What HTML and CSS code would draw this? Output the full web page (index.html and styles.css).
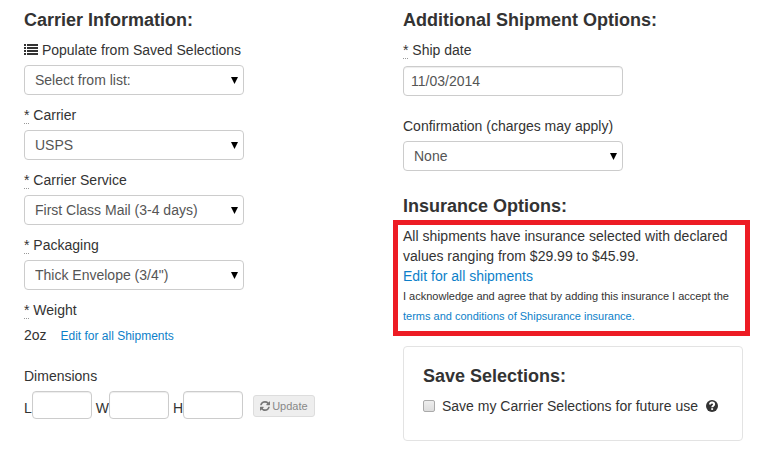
FILE: index.html
```html
<!DOCTYPE html>
<html lang="en">
<head>
    <meta charset="UTF-8">
    <title>Shipment Options</title>
    <link rel="stylesheet" href="styles.css">
</head>
<body>
    <form class="columns">
        <section class="column">
            <h4>Carrier Information:</h4>

            <div class="field">
                <label for="saved">
                    <svg class="icon-list" viewBox="0 0 14 11" aria-hidden="true"><path d="M0 0h2v2H0zM3 0h11v2H3zM0 3h2v2H0zM3 3h11v2H3zM0 6h2v2H0zM3 6h11v2H3zM0 9h2v2H0zM3 9h11v2H3z"/></svg>
                    Populate from Saved Selections
                </label>
                <select id="saved"><option>Select from list:</option></select>
            </div>
            <div class="field">
                <label for="carrier"><abbr title="required">*</abbr> Carrier</label>
                <select id="carrier"><option>USPS</option></select>
            </div>
            <div class="field">
                <label for="service"><abbr title="required">*</abbr> Carrier Service</label>
                <select id="service"><option>First Class Mail (3-4 days)</option></select>
            </div>
            <div class="field">
                <label for="packaging"><abbr title="required">*</abbr> Packaging</label>
                <select id="packaging"><option>Thick Envelope (3/4")</option></select>
            </div>

            <div class="weight">
                <div class="title"><abbr title="required">*</abbr> Weight</div>
                <span>2oz</span>
                <a class="edit-weight" href="#">Edit for all Shipments</a>
            </div>

            <div class="title">Dimensions</div>
            <div class="dimensions">
                <label for="length">L</label><input type="text" id="length">
                <label for="width">W</label><input type="text" id="width">
                <label for="height">H</label><input type="text" id="height">
                <button type="button" class="btn" disabled>
                    <svg class="icon-refresh" viewBox="0 0 1536 1536" aria-hidden="true"><path d="M1511 928q0 5-1 7-64 268-268 434.500T764 1536q-146 0-282.500-55T238 1324l-129 129q-19 19-45 19t-45-19-19-45V960q0-26 19-45t45-19h448q26 0 45 19t19 45-19 45l-137 137q71 66 161 102t187 36q134 0 250-65t186-179q11-17 53-117 8-23 30-23h192q13 0 22.500 9.500t9.500 22.500zM1536 128v448q0 26-19 45t-45 19h-448q-26 0-45-19t-19-45 19-45l138-138Q970 256 768 256q-134 0-250 65T332 500q-11 17-53 117-8 23-30 23H50q-13 0-22.500-9.500T18 608v-7q65-268 270-434.500T768 0q146 0 284 55.500T1297 212l130-129q19-19 45-19t45 19 19 45z"/></svg>
                    Update
                </button>
            </div>
        </section>

        <section class="column">
            <h4>Additional Shipment Options:</h4>

            <div class="field field-date">
                <label for="ship-date"><abbr title="required">*</abbr> Ship date</label>
                <input type="text" id="ship-date" value="11/03/2014">
            </div>
            <div class="field field-confirmation">
                <label for="confirmation">Confirmation (charges may apply)</label>
                <select id="confirmation"><option>None</option></select>
            </div>

            <h4>Insurance Options:</h4>
            <div class="insurance">
                <div>All shipments have insurance selected with declared values ranging from $29.99 to $45.99.</div>
                <a href="#">Edit for all shipments</a>
                <div class="terms">I acknowledge and agree that by adding this insurance I accept the <a href="#">terms and conditions of Shipsurance insurance.</a></div>
            </div>

            <div class="panel">
                <h4>Save Selections:</h4>
                <div class="save">
                    <input type="checkbox" id="save">
                    <label for="save">Save my Carrier Selections for future use</label>
                    <svg class="icon-help" viewBox="0 0 12 12" aria-hidden="true"><circle cx="6" cy="6" r="6"/><path class="mark" d="M4 4.600C4 3.200 4.900 2.600 6 2.600S8.100 3.300 8.100 4.400C8.100 5.700 6.200 5.700 6.200 7.300"/><path class="dot" d="M5.200 8.200h1.900v1.700H5.200z"/></svg>
                </div>
            </div>
        </section>
    </form>
</body>
</html>
```

FILE: styles.css
```css
* {
    box-sizing: border-box;
}
body {
    margin: 0;
    padding: 10px 24px 8px;
    background: #fff;
    color: #333;
    font-family: "Liberation Sans", Arial, sans-serif;
    font-size: 14px;
    line-height: 20px;
}
.columns {
    display: grid;
    grid-template-columns: 1fr 1fr;
    column-gap: 39px;
}
h4 {
    margin: 0 0 10px;
    font-size: 18px;
    line-height: 20px;
}
a {
    color: #0d7fc9;
    text-decoration: none;
}
abbr {
    text-decoration: none;
    border-bottom: 1px dotted #999;
}

/* form fields */
.field {
    margin-bottom: 10px;
}
.field label {
    display: block;
    margin-bottom: 5px;
}
select,
input[type="text"] {
    display: block;
    width: 220px;
    height: 30px;
    border: 1px solid #ccc;
    border-radius: 4px;
    background-color: #fff;
    color: #555;
    font: inherit;
}
select {
    appearance: none;
    padding: 0 24px 0 10px;
    background-image: url("data:image/svg+xml,%3Csvg xmlns='http://www.w3.org/2000/svg' width='7' height='7'%3E%3Cpath d='M0 0h7L3.500 7z'/%3E%3C/svg%3E");
    background-repeat: no-repeat;
    background-position: right 5px center;
}
input[type="text"] {
    padding: 0 7px;
    box-shadow: inset 0 1px 1px rgba(0,0,0,0.075);
}
.field-date {
    margin-bottom: 20px;
}
.field-date label {
    margin-bottom: 6px;
}
.field-confirmation {
    margin-bottom: 25px;
}

/* weight and dimensions */
.weight {
    margin-bottom: 20px;
}
.title {
    margin-bottom: 5px;
}
.edit-weight {
    margin-left: 10px;
    font-size: 12px;
}
.dimensions {
    display: flex;
    align-items: center;
}
.dimensions label {
    padding-top: 6px;
}
.dimensions input[type="text"] {
    width: 60px;
    height: 28px;
    margin-right: 4px;
}
.btn {
    display: flex;
    align-items: center;
    gap: 2px;
    height: 22px;
    margin: 2px 0 0 6px;
    padding: 0 6px;
    border: 1px solid #ddd;
    border-radius: 3px;
    background: #eee;
    color: #888;
    font: inherit;
    font-size: 11px;
}

/* insurance */
.insurance {
    margin: -6px -7px 10px -10px;
    padding: 1px 5px 5px;
    border: 5px solid #ed1c24;
}
.terms {
    font-size: 11px;
}

/* save selections */
.panel {
    padding: 19px;
    border: 1px solid #e3e3e3;
    border-radius: 4px;
}
.save {
    display: flex;
    align-items: center;
    padding-bottom: 5px;
}
.save input {
    appearance: none;
    width: 12px;
    height: 12px;
    margin: 0 7px 0 0;
    border: 1px solid #aaa;
    border-radius: 2px;
    background: linear-gradient(#eee, #ddd);
}
.save input:checked {
    background: #0d7fc9;
}

/* icons */
.icon-list {
    width: 14px;
    height: 11px;
    fill: #333;
}
.icon-refresh {
    width: 10px;
    height: 10px;
    fill: #777;
}
.icon-help {
    width: 12px;
    height: 12px;
    margin-left: 8px;
    fill: #333;
}
.icon-help .mark {
    fill: none;
    stroke: #fff;
    stroke-width: 2;
}
.icon-help .dot {
    fill: #fff;
}
```
